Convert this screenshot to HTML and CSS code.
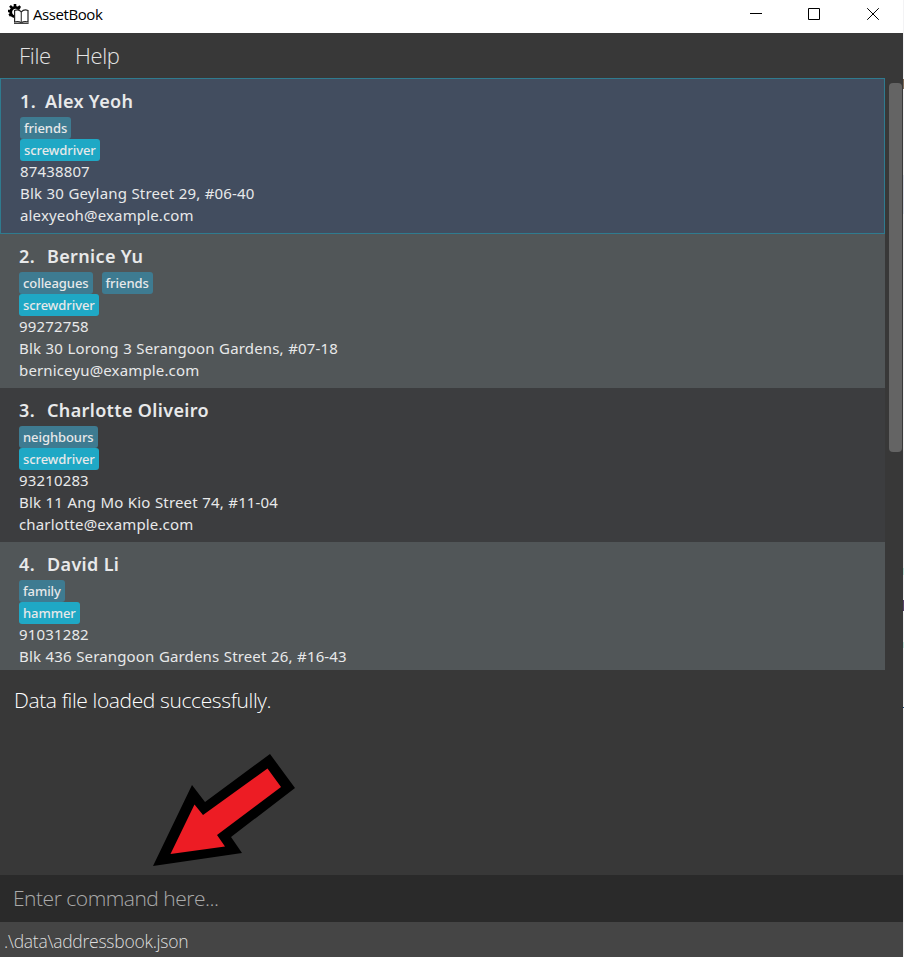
FILE: index.html
```html
<!DOCTYPE html>
<html lang="en">
<head>
<meta charset="utf-8">
<title>AssetBook</title>
<link rel="stylesheet" href="styles.css">
</head>
<body>
<div class="window">
  <header class="titlebar">
    <svg class="logo" width="22" height="22" viewBox="0 0 22 22">
      <g fill="none" stroke="#000">
        <path d="M7 13.800A4.700 4.700 0 1 1 11.300 6.500" stroke-width="2.800"/>
        <path d="M7 1v3M2 2.900l2 2M0 8h3M1.200 12.600l2.200-1.700M12.200 3.100l-2 2" stroke-width="2.600"/>
      </g>
      <path d="M6.600 7.500q4-1.500 6.700 1.300 2.700-2.800 6.700-1.300v11.500q-4-1-6.700 .8-2.700-1.800-6.700-.8z" fill="#fff" stroke="#222" stroke-width="1.200"/>
      <path d="M13.300 9v11M6 20.400h14.600" stroke="#444" stroke-width="1.200"/>
    </svg>
    <span class="app-name">AssetBook</span>
    <div class="controls">
      <svg width="12" height="12" viewBox="0 0 12 12"><path d="M0 5.500h12"/></svg>
      <svg width="12" height="12" viewBox="0 0 12 12"><path d="M.5.500h11v11H.5z"/></svg>
      <svg width="12" height="12" viewBox="0 0 12 12"><path d="M.2.200l11.600 11.600M11.800.2L.2 11.800"/></svg>
    </div>
  </header>
  <nav class="menu"><span class="file">File</span><span class="help">Help</span></nav>
  <main class="people">
    <div class="list">
      <article class="person selected">
        <h2><span class="num">1.</span><span>Alex Yeoh</span></h2>
        <div class="tags"><span class="tag">friends</span></div>
        <div class="tags"><span class="tag asset">screwdriver</span></div>
        <p>87438807</p><p>Blk 30 Geylang Street 29, #06-40</p><p>alexyeoh@example.com</p>
      </article>
      <article class="person even">
        <h2><span class="num">2.</span><span>Bernice Yu</span></h2>
        <div class="tags"><span class="tag">colleagues</span><span class="tag">friends</span></div>
        <div class="tags"><span class="tag asset">screwdriver</span></div>
        <p>99272758</p><p>Blk 30 Lorong 3 Serangoon Gardens, #07-18</p><p>berniceyu@example.com</p>
      </article>
      <article class="person">
        <h2><span class="num">3.</span><span>Charlotte Oliveiro</span></h2>
        <div class="tags"><span class="tag">neighbours</span></div>
        <div class="tags"><span class="tag asset">screwdriver</span></div>
        <p>93210283</p><p>Blk 11 Ang Mo Kio Street 74, #11-04</p><p>charlotte@example.com</p>
      </article>
      <article class="person even">
        <h2><span class="num">4.</span><span>David Li</span></h2>
        <div class="tags"><span class="tag">family</span></div>
        <div class="tags"><span class="tag asset">hammer</span></div>
        <p>91031282</p><p>Blk 436 Serangoon Gardens Street 26, #16-43</p>
      </article>
    </div>
    <div class="scrollbar"><div class="thumb"></div></div>
  </main>
  <section class="result">
    <p>Data file loaded successfully.</p>
    <svg class="arrow" width="144" height="114" viewBox="0 0 144 114">
      <path d="M0 112L39 31 52 48 117 0 142 34 78 83 89 99z" fill="#000"/>
      <path d="M17.500 100L41.500 50.500 50 61 114.500 14.500 128 33 64 81 72 92.500z" fill="#ed1c24"/>
    </svg>
  </section>
  <div class="command">Enter command here...</div>
  <footer class="status">.\data\addressbook.json</footer>
</div>
</body>
</html>
```

FILE: styles.css
```css
* { box-sizing: border-box; }
body {
  margin: 0;
  background: linear-gradient(#f3f3f5 79px, #86715f 79px 89px, #f3f3f5 89px 175px, #dfe3ee 175px 214px, #f3f3f5 214px 568px, #c9eae4 568px 575px, #f3f3f5 575px 600px, #5a4670 600px 611px, #f3f3f5 611px 642px, #c9eae4 642px 648px, #f3f3f5 648px 707px, #2c5a8c 707px 708px, #f3f3f5 708px);
  font-family: "Noto Sans", sans-serif;
  overflow: hidden;
}
h2, p { margin: 0; }
.window { width: 903px; height: 957px; display: flex; flex-direction: column; background: #383838; }
.titlebar { height: 33px; flex: none; display: flex; background: #fff; padding-left: 8px; }
.logo { margin-top: 3px; }
.app-name { margin-left: 3px; font: 15px/29px "Open Sans", sans-serif; letter-spacing: -.42px; color: #000; }
.controls { display: flex; gap: 47px; margin: 8px 24px 0 auto; }
.controls svg:first-child { margin-right: -1px; }
.controls path { fill: none; stroke: #000; stroke-width: 1; }
.menu { height: 45px; flex: none; display: flex; padding-left: 19px; gap: 24px; font: 300 22px/44px "Open Sans", sans-serif; letter-spacing: -.3px; color: #e4e4e4; }
.people { height: 592px; flex: none; display: flex; }
.list { width: 885px; overflow: hidden; }
.person { height: 154px; padding: 10px 19px 0; background: #3c3d3f; color: #e8e9ea; }
.even { background: #515658; }
.selected { height: 156px; border: 1px solid #2f7b8f; background: #424d5f; }
.person h2 { height: 28px; display: flex; font: 600 18px/24px "Noto Sans", sans-serif; letter-spacing: .35px; }
.num { width: 28px; }
.selected .num { width: 25px; }
.tags { height: 22px; display: flex; gap: 9px; }
.tag { height: 22px; padding: 1px 4px 0; border-radius: 3px; background: #3e7b91; font: 500 13px/21px "Noto Sans", sans-serif; letter-spacing: -.07px; }
.asset { background: #1fa8c5; }
.person p { height: 22px; font-size: 15px; line-height: 20px; letter-spacing: .15px; word-spacing: .4px; }
.scrollbar { flex: 1; padding: 5px 1px 0 4px; }
.thumb { width: 13px; height: 369px; border-radius: 4px; background: #646464; }
.result { height: 205px; flex: none; color: #fff; }
.result p { height: 84px; padding-left: 14px; font: 300 21px/61px "Open Sans", sans-serif; letter-spacing: -.38px; }
.arrow { display: block; margin-left: 153px; }
.command { height: 47px; flex: none; padding-left: 13px; background: #2a2a2a; color: #aaa; font: 300 21px/46px "Open Sans", sans-serif; letter-spacing: -.48px; }
.status { flex: 1; padding-left: 4px; background: #454545; color: #dedede; font: 300 17.500px/38px "Open Sans", sans-serif; letter-spacing: -.25px; }
```
